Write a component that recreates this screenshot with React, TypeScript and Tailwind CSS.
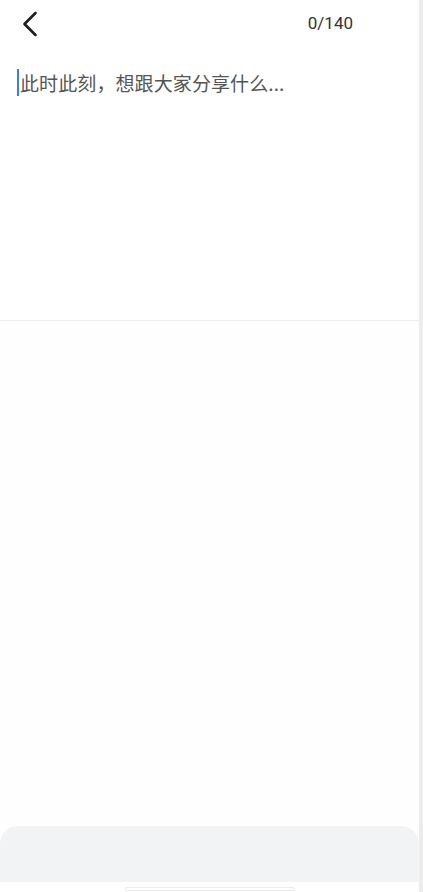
export default function App() {
  return (
    <div className="flex h-[892px] w-[423px] bg-white font-['Roboto','Noto_Sans_CJK_SC',sans-serif]">
      <div className="flex w-[419px] flex-col">
        {/* top bar */}
        <header className="flex h-[47px] items-center justify-between pl-[14px] pr-[66px]">
          <button className="flex h-8 w-8 items-center justify-center" aria-label="back">
            <svg width="18" height="26" viewBox="0 0 18 26" fill="none">
              <path
                d="M14.5 2 L3.5 13 L14.5 24"
                stroke="#1f1f1f"
                strokeWidth="2.7"
                strokeLinecap="round"
                strokeLinejoin="round"
              />
            </svg>
          </button>
          <span className="text-[17px] text-[#333]">0/140</span>
        </header>

        {/* editor */}
        <section className="h-[274px] border-b border-[#efefef] pl-[17px] pt-[22px]">
          <div className="flex items-center">
            <span className="h-[27px] w-[2px] bg-[#3a7bf0]" />
            <span className="pl-[1px] text-[19px] leading-[27px] tracking-[0.1px] text-[#555] font-['Noto_Sans_CJK_SC',sans-serif]">
              此时此刻，想跟大家分享什么...
            </span>
          </div>
        </section>

        <div className="flex-1 bg-[#fefefe]" />

        {/* toolbar panel */}
        <div className="h-[56px] rounded-t-[18px] bg-[#f2f3f5]" />

        {/* home indicator */}
        <div className="flex h-[10px] items-start justify-center bg-white pt-[5px]">
          <div className="h-[4px] w-[170px] rounded-full border border-[#ececec]" />
        </div>
      </div>
      <div className="w-[4px] bg-[#ececec]" />
    </div>
  );
}
